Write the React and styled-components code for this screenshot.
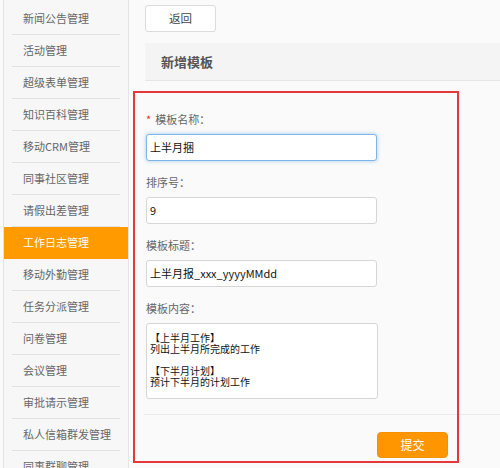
import React from 'react';
import styled, { createGlobalStyle } from 'styled-components';

const GlobalStyle = createGlobalStyle`
  html, body { margin: 0; padding: 0; background: #fafafa; }
  body { font-family: "Noto Sans CJK SC", "Noto Sans", sans-serif; }
`;

const Page = styled.div`
  position: relative;
  display: flex;
  width: 500px;
  height: 468px;
  overflow: hidden;
  background: #fafafa;
`;

// --- SIDEBAR ---
const Sidebar = styled.ul`
  list-style: none;
  margin: 0 0 0 3px;
  padding: 3px 0 0;
  width: 124px;
  flex-shrink: 0;
  background: #f7f7f7;
  border-left: 1px solid #e4e4e4;
  border-right: 1px solid #e4e4e4;
`;
const NavItem = styled.li`
  position: relative;
  height: 31px;
  line-height: 31px;
  padding-left: 19px;
  font-size: 11px;
  white-space: nowrap;
  color: ${p => (p.$active ? '#fff' : '#666')};
  background: ${p => (p.$active ? '#ff9a00' : 'transparent')};
  border-bottom: 1px solid transparent;
  &::after {
    content: '';
    position: absolute;
    left: 8px;
    right: 8px;
    bottom: -1px;
    height: 1px;
    background: ${p => (p.$active ? 'transparent' : '#e2e2e2')};
  }
`;

// --- MAIN ---
const Main = styled.div`
  flex: 1;
  padding: 4px 0 0 16px;
  display: flex;
  flex-direction: column;
`;
const BackButton = styled.button`
  width: 71px;
  height: 27px;
  padding: 0;
  background: #fff;
  border: 1px solid #dcdcdc;
  border-radius: 3px;
  font-family: inherit;
  font-size: 11.5px;
  color: #444;
`;
const PanelHeader = styled.div`
  margin-top: 11px;
  height: 37px;
  line-height: 37px;
  padding-left: 16px;
  background: #f4f4f4;
  border-bottom: 1px solid #e6e6e6;
  font-size: 13px;
  font-weight: 700;
  color: #555;
`;
const Form = styled.form`
  padding: 28px 0 0 1px;
  display: flex;
  flex-direction: column;
`;
const Label = styled.label`
  display: block;
  height: 20px;
  line-height: 20px;
  margin-bottom: 5px;
  font-size: 11px;
  color: #666;
`;
const Star = styled.span`
  color: #e33;
  margin-right: 4px;
`;
const Input = styled.input`
  box-sizing: border-box;
  width: 231px;
  height: 27px;
  margin: 0 0 11px;
  padding: 0 3px;
  background: #fff;
  border: 1px solid ${p => (p.$focus ? '#7fb5e6' : '#d6d6d6')};
  border-radius: 3px;
  box-shadow: ${p => (p.$focus ? '0 0 4px rgba(102,175,233,0.6)' : 'none')};
  font-family: inherit;
  font-size: 11px;
  color: #111;
  outline: none;
`;
const TextArea = styled.textarea`
  box-sizing: border-box;
  width: 232px;
  height: 76px;
  margin: 0;
  padding: 8px 3px 0;
  background: #fff;
  border: 1px solid #d6d6d6;
  border-radius: 3px;
  font-family: inherit;
  font-size: 10px;
  line-height: 11px;
  color: #111;
  resize: none;
  overflow: hidden;
  outline: none;
`;
const FormFooter = styled.div`
  margin: 15px 0 0 -2px;
  padding: 17px 52px 0 0;
  border-top: 1px solid #ebebeb;
  display: flex;
  justify-content: flex-end;
`;
const SubmitButton = styled.button`
  width: 71px;
  height: 26px;
  padding: 0;
  background: #ff9600;
  border: 1px solid #f59000;
  border-radius: 4px;
  font-family: inherit;
  font-size: 12px;
  color: #fff;
`;

// annotation frame drawn on top of the form
const Highlight = styled.div`
  position: absolute;
  left: 133px;
  top: 91px;
  width: 322px;
  height: 368px;
  border: 2px solid #e5383b;
  pointer-events: none;
`;

const navItems = [
  '新闻公告管理', '活动管理', '超级表单管理', '知识百科管理', '移动CRM管理',
  '同事社区管理', '请假出差管理', '工作日志管理', '移动外勤管理', '任务分派管理',
  '问卷管理', '会议管理', '审批请示管理', '私人信箱群发管理', '同事群聊管理',
];

const content = '【上半月工作】\n列出上半月所完成的工作\n\n【下半月计划】\n预计下半月的计划工作';

export default function App() {
  return (
    <Page>
      <GlobalStyle />
      <Sidebar>
        {navItems.map(name => (
          <NavItem key={name} $active={name === '工作日志管理'}>{name}</NavItem>
        ))}
      </Sidebar>
      <Main>
        <div><BackButton type="button">返回</BackButton></div>
        <PanelHeader>新增模板</PanelHeader>
        <Form onSubmit={e => e.preventDefault()}>
          <Label><Star>*</Star>模板名称：</Label>
          <Input $focus defaultValue="上半月捆" />
          <Label>排序号：</Label>
          <Input defaultValue="9" />
          <Label>模板标题：</Label>
          <Input defaultValue="上半月报_xxx_yyyyMMdd" />
          <Label>模板内容：</Label>
          <TextArea defaultValue={content} />
          <FormFooter>
            <SubmitButton type="submit">提交</SubmitButton>
          </FormFooter>
        </Form>
      </Main>
      <Highlight />
    </Page>
  );
}
